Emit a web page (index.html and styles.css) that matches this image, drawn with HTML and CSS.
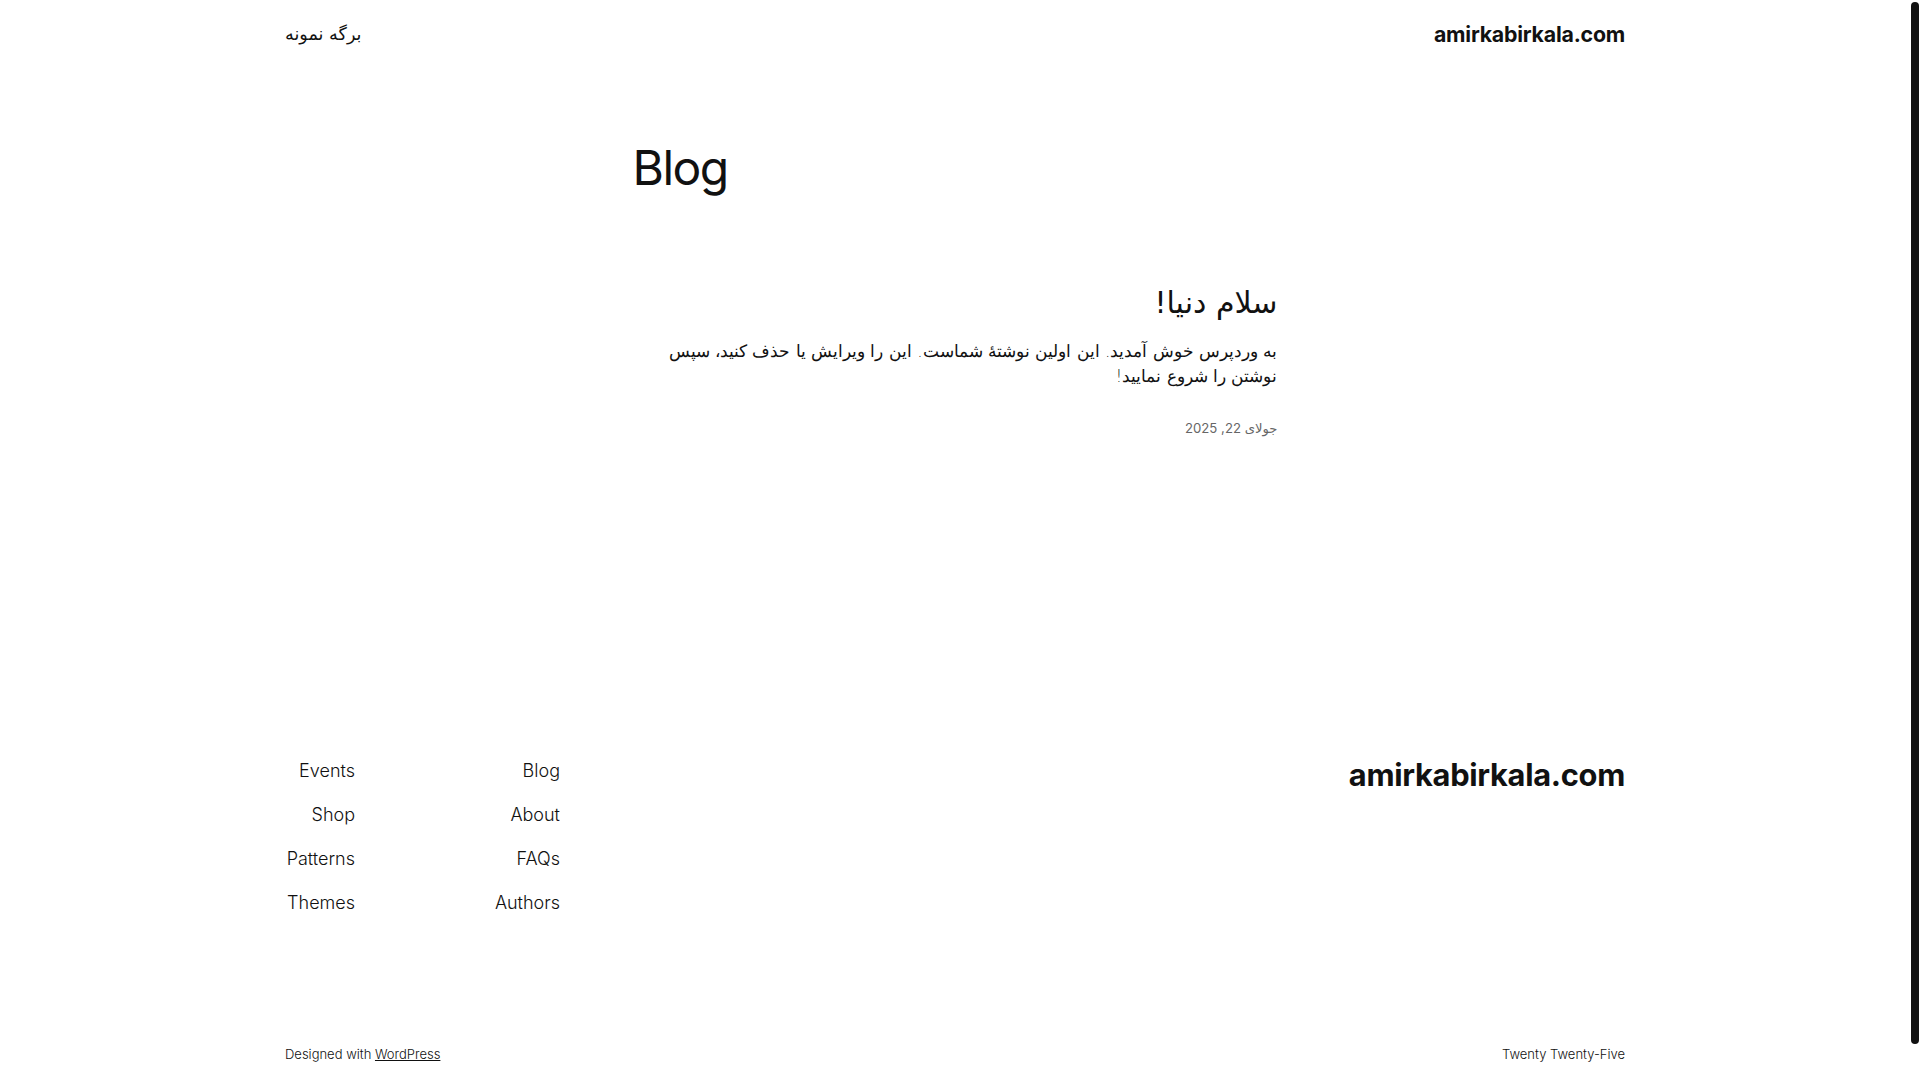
FILE: index.html
```html
<!DOCTYPE html>
<html lang="fa" dir="rtl">
<head>
<meta charset="utf-8">
<title>Blog – amirkabirkala.com</title>
<link rel="stylesheet" href="styles.css">
</head>
<body>
<div class="page">
  <header class="site-header wrap">
    <a class="site-title" href="#"><bdi>amirkabirkala.com</bdi></a>
    <nav class="header-nav"><a href="#">برگه نمونه</a></nav>
  </header>

  <main class="main">
    <h1 class="page-title">Blog</h1>
    <article class="post">
      <h2 class="post-title"><a href="#">سلام دنیا!</a></h2>
      <p class="excerpt">به وردپرس خوش آمدید. این اولین نوشتهٔ شماست. این را ویرایش یا حذف کنید، سپس نوشتن را شروع نمایید!</p>
      <div class="post-date">جولای 22, 2025</div>
    </article>
  </main>

  <footer class="site-footer wrap">
    <div class="footer-top">
      <a class="footer-title" href="#"><bdi>amirkabirkala.com</bdi></a>
      <div class="footer-navs">
        <ul class="footer-nav col-a">
          <li><a href="#">Blog</a></li>
          <li><a href="#">About</a></li>
          <li><a href="#">FAQs</a></li>
          <li><a href="#">Authors</a></li>
        </ul>
        <ul class="footer-nav col-b">
          <li><a href="#">Events</a></li>
          <li><a href="#">Shop</a></li>
          <li><a href="#">Patterns</a></li>
          <li><a href="#">Themes</a></li>
        </ul>
      </div>
    </div>
    <div class="footer-bottom">
      <span class="credit">Twenty Twenty-Five</span>
      <span class="credit" dir="ltr">Designed with <a href="#">WordPress</a></span>
    </div>
  </footer>
</div>
<div class="scroll-thumb" aria-hidden="true"></div>
</body>
</html>
```

FILE: styles.css
```css
html, body {
  margin: 0;
  padding: 0;
  background: #ffffff;
}

body {
  font-family: "Inter", "DejaVu Sans", sans-serif;
  font-weight: 300;
  color: #111111;
  padding-right: 10px;
}

a {
  color: inherit;
  text-decoration: none;
}

.page {
  min-height: 1117px;
  display: flex;
  flex-direction: column;
}

.wrap {
  width: 100%;
  max-width: 1340px;
  margin: 0 auto;
  box-sizing: border-box;
}

/* Fake scrollbar thumb of the reference window */
.scroll-thumb {
  position: fixed;
  top: 2px;
  right: 1px;
  width: 8px;
  height: 1042px;
  border-radius: 4px;
  background: #111111;
}

/* Header */
.site-header {
  display: flex;
  justify-content: space-between;
  align-items: center;
  height: 68px;
}

.site-title {
  font-size: 21.3px;
  font-weight: 700;
  letter-spacing: -0.2px;
}

.header-nav a {
  font-family: "DejaVu Sans", sans-serif;
  font-size: 17.6px;
  font-weight: 400;
}

/* Main */
.main {
  width: 645px;
  margin: 0 auto;
  padding-top: 71px;
}

.page-title {
  margin: 0;
  font-size: 48px;
  font-weight: 400;
  line-height: 1.2;
  letter-spacing: -1.5px;
  text-align: left;
  direction: ltr;
}

.post {
  margin-top: 88px;
}

.post-title {
  margin: 0;
  font-family: "DejaVu Sans", sans-serif;
  font-size: 30px;
  font-weight: 400;
  line-height: 1.2;
}

.excerpt {
  margin: 18px 0 0;
  font-family: "DejaVu Sans", sans-serif;
  font-size: 16.9px;
  line-height: 25px;
}

.post-date {
  margin-top: 31px;
  font-size: 13.2px;
  line-height: 17px;
  font-weight: 400;
  color: #666666;
}

/* Footer */
.site-footer {
  margin-top: auto;
  padding-bottom: 55px;
}

.footer-top {
  display: flex;
  justify-content: space-between;
  align-items: flex-start;
}

.footer-title {
  font-size: 30.8px;
  font-weight: 700;
  letter-spacing: -0.3px;
  line-height: 30px;
}

.footer-navs {
  display: flex;
}

.footer-nav {
  list-style: none;
  margin: 0;
  padding: 0;
  display: flex;
  flex-direction: column;
  gap: 22px;
  font-size: 18px;
  line-height: 22px;
  text-align: right;
}

.col-a {
  width: 205px;
}

.col-b {
  width: 70px;
}

.footer-bottom {
  display: flex;
  justify-content: space-between;
  margin-top: 132px;
  font-size: 13px;
  font-weight: 300;
}

.credit a {
  text-decoration: underline;
}
```
